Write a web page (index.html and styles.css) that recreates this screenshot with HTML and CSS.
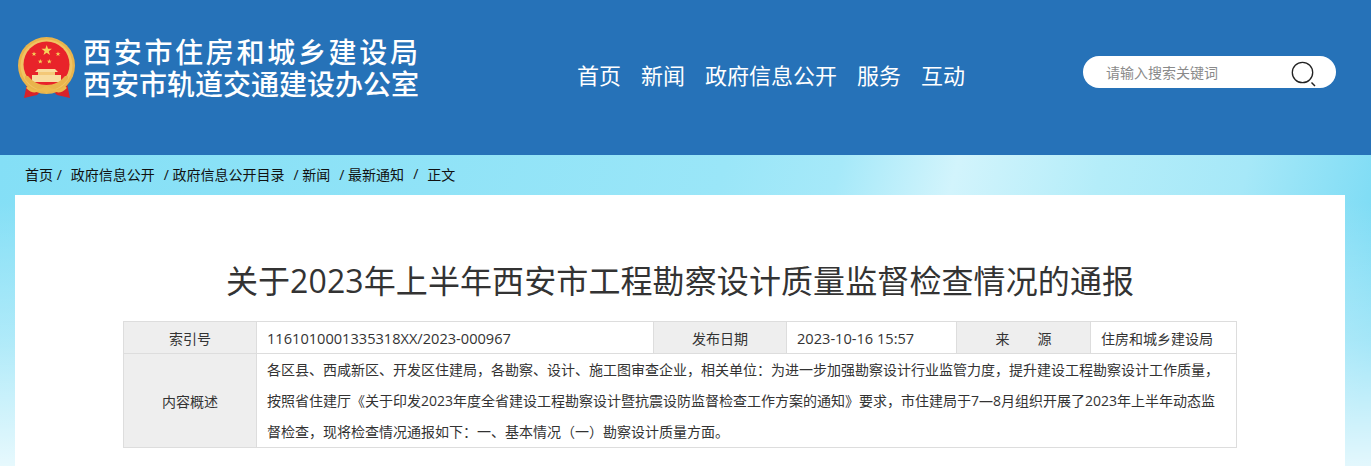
FILE: index.html
```html
<!DOCTYPE html>
<html lang="zh-CN">
  <head>
    <meta charset="UTF-8" />
    <title>关于2023年上半年西安市工程勘察设计质量监督检查情况的通报</title>
    <link rel="stylesheet" href="styles.css">
  </head>
  <body>
    <header class="top">
      <div class="logo">
        <svg class="emblem" width="58" height="62" viewBox="0 0 58 62">
          <defs>
            <polygon id="star" points="0,-1 0.24,-0.31 0.95,-0.31 0.38,0.12 0.59,0.81 0,0.4 -0.59,0.81 -0.38,0.12 -0.95,-0.31 -0.24,-0.31" fill="#f6d35a" />
          </defs>
          <path d="M9 47l-3 14 13-3 5-5h10l5 5 13 3-3-14z" fill="#d8222a" />
          <circle cx="28.5" cy="28.5" r="28.5" fill="#e9b44c" />
          <circle cx="28.5" cy="28.5" r="26" fill="#f0c463" />
          <circle cx="28.5" cy="27.5" r="23" fill="#e8232a" />
          <use href="#star" transform="translate(28.7 13.5) scale(5.5)" />
          <use href="#star" transform="translate(16 17) scale(2.6)" />
          <use href="#star" transform="translate(40 17) scale(2.6)" />
          <use href="#star" transform="translate(22.3 24.5) scale(2.6)" />
          <use href="#star" transform="translate(31.3 24.5) scale(2.6)" />
          <path d="M20 32h17l3 3H17z" fill="#f8dca0" />
          <rect x="20" y="35" width="17" height="3" fill="#f3c878" />
          <rect x="14" y="38" width="29" height="7" fill="#f8dca0" />
          <path d="M7 42c6 8 14 12 21.500 12S44 50 50 42v-3l-3 0c-5 6-11 9-18.500 9S15 45 10 39H7z" fill="#e9b44c" />
          <path d="M9 50c4 4 8 5 11 3 3 1 5 0 8.500-3 3.500 3 5.500 4 8.500 3 3 2 7 1 11-3" fill="none" stroke="#ecbb4e" stroke-width="2.600" />
          <path d="M25 53l3.500-3 3.500 3-3.500 4z" fill="#ecbb4e" />
        </svg>
        <div class="logo-text">
          <p class="logo-line wide">西安市住房和城乡建设局</p>
          <p class="logo-line">西安市轨道交通建设办公室</p>
        </div>
      </div>
      <nav class="menu">
        <a>首页</a>
        <a>新闻</a>
        <a>政府信息公开</a>
        <a>服务</a>
        <a>互动</a>
      </nav>
      <div class="search">
        <span class="search-hint">请输入搜索关键词</span>
        <svg width="26" height="26" viewBox="0 0 26 26">
          <circle cx="11.5" cy="11.5" r="10.2" fill="none" stroke="#222" stroke-width="1.3" />
          <path d="M20.5 21.5l3.500 3.500" stroke="#222" stroke-width="1.500" />
        </svg>
      </div>
    </header>

    <div class="page">
      <div class="crumbs">
        <span>首页 /</span>
        <span>政府信息公开</span>
        <span>/ 政府信息公开目录</span>
        <span>/ 新闻</span>
        <span>/ 最新通知</span>
        <span>/</span>
        <span>正文</span>
      </div>

      <main class="card">
        <h1>关于2023年上半年西安市工程勘察设计质量监督检查情况的通报</h1>
        <table class="info">
          <colgroup>
            <col class="c1" /><col class="c2" /><col class="c3" /><col class="c4" /><col class="c5" /><col class="c6" />
          </colgroup>
          <tr class="short">
            <th>索引号</th>
            <td class="num">1161010001335318XX/2023-000967</td>
            <th>发布日期</th>
            <td class="num">2023-10-16 15:57</td>
            <th>来&emsp;&emsp;源</th>
            <td>住房和城乡建设局</td>
          </tr>
          <tr>
            <th>内容概述</th>
            <td colspan="5" class="summary">各区县、西咸新区、开发区住建局，各勘察、设计、施工图审查企业，相关单位：为进一步加强勘察设计行业监管力度，提升建设工程勘察设计工作质量，<br>按照省住建厅《关于印发2023年度全省建设工程勘察设计暨抗震设防监督检查工作方案的通知》要求，市住建局于7—8月组织开展了2023年上半年动态监<br>督检查，现将检查情况通报如下：一、基本情况（一）勘察设计质量方面。</td>
          </tr>
        </table>
      </main>
    </div>
  </body>
</html>
```

FILE: styles.css
```css
* {
  box-sizing: border-box;
}
html,
body {
  height: 466px;
  overflow: hidden;
}
body {
  margin: 0;
  font-family: "Open Sans", "Noto Sans CJK SC", sans-serif;
  color: #333;
  background-color: #8fe0f5;
}
p,
h1 {
  margin: 0;
}

/* header */
.top {
  height: 155px;
  background-color: #2672b8;
  display: flex;
  align-items: flex-start;
  color: #fff;
}
.logo {
  display: flex;
  gap: 8px;
  width: 577px;
  padding: 37px 0 0 18px;
}
.logo-text {
  margin: 1px 0 0 -1px;
}
.logo-line {
  font-family: "Liberation Sans", "Noto Sans CJK SC", sans-serif;
  font-size: 28px;
  line-height: 32px;
  font-weight: 500;
  white-space: nowrap;
}
.wide {
  letter-spacing: 2.7px;
}
.menu {
  display: flex;
  gap: 20px;
  width: 506px;
  padding-top: 60px;
  font-size: 22px;
  line-height: 30px;
}
.search {
  margin-top: 56px;
  width: 253px;
  height: 32px;
  border-radius: 16px;
  background-color: #fff;
  display: flex;
  align-items: center;
  justify-content: space-between;
  padding: 3px 19px 0 23px;
}
.search-hint {
  font-size: 14px;
  color: #8a8a8a;
  margin-top: -4px;
}

/* page */
.page {
  height: 311px;
  background:
    linear-gradient(180deg, rgba(255, 255, 255, 0) 15%, rgba(255, 255, 255, 0.35) 60%, rgba(255, 255, 255, 0.8) 100%),
    linear-gradient(105deg, #84dff6 0%, #90e3f7 30%, #9ae6f8 50%, #a6e9f9 58%, #d2f4fc 66%, #b4edf9 76%, #a6e8f8 86%, #74d9f4 98%);
  overflow: hidden;
}
.crumbs {
  height: 37px;
  padding-left: 25px;
  display: flex;
  align-items: center;
  gap: 9px;
  font-size: 14px;
  color: #111;
}
.card {
  margin: 3px 26px 0 15px;
  background-color: #fff;
  height: 271px;
  padding-top: 64px;
}
h1 {
  font-size: 32px;
  line-height: 44px;
  font-weight: 400;
  letter-spacing: 0.1px;
  text-align: center;
  margin-bottom: 18px;
  color: #333;
}

/* table */
.info {
  margin-left: 108px;
  width: 1113px;
  table-layout: fixed;
  border-collapse: collapse;
  font-size: 14px;
}
.c1 { width: 133px; }
.c2 { width: 397px; }
.c3 { width: 133px; }
.c4 { width: 170px; }
.c5 { width: 134px; }
.c6 { width: 146px; }
.info th,
.info td {
  border: 1px solid #ddd;
}
.info th {
  background-color: #eee;
  font-weight: 400;
}
.info td {
  padding: 0 10px;
  white-space: nowrap;
}
.short {
  height: 32px;
}
.num {
  font-size: 14.6px;
}
.summary {
  line-height: 31px;
}
```
